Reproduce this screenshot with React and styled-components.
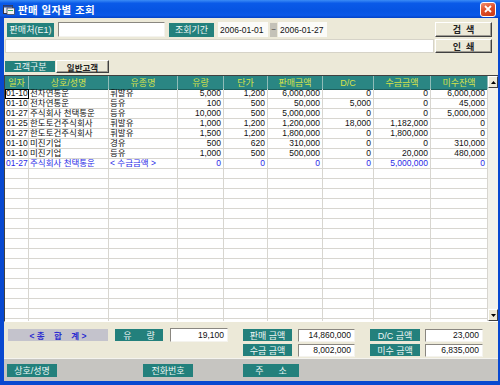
import React from "react";
import styled, { createGlobalStyle } from "styled-components";

const Global = createGlobalStyle`
  html, body { margin: 0; padding: 0; background: #fff; }
  body { font-family: "Liberation Sans", "Noto Sans CJK KR", sans-serif; }
  * { box-sizing: border-box; }
`;

const COLS = "24px 80px 69px 46px 44px 55px 51px 57px 57px";

const Window = styled.div`
  width: 500px;
  height: 385px;
  background: #0848d0;
  display: flex;
  flex-direction: column;
  overflow: hidden;
`;

const TitleBar = styled.div`
  height: 18px;
  display: flex;
  align-items: center;
  padding: 0 6px 0 3px;
  background: linear-gradient(180deg, #3b8cf6 0%, #0a5ae8 18%, #0654e2 60%, #0a58e8 85%, #0342c6 100%);
`;

const TitleText = styled.span`
  color: #fff;
  font-size: 10.5px;
  font-weight: bold;
  margin-left: 3px;
  letter-spacing: 0.4px;
  flex: 1;
`;

const CloseBtn = styled.div`
  width: 16px;
  height: 15px;
  border: 1px solid #fff;
  border-radius: 3px;
  background: linear-gradient(160deg, #f09070 0%, #e0502a 45%, #c83a16 100%);
  display: flex;
  align-items: center;
  justify-content: center;
  margin-right: -2px;
`;

const Body = styled.div`
  flex: 1;
  margin: 0 2px 4px 4px;
  background: #ece9d8;
  display: flex;
  flex-direction: column;
`;

const Top = styled.div`
  display: flex;
  padding: 4px 0 0 1px;
  gap: 1px;
`;

const TopLeft = styled.div`
  width: 429px;
  display: flex;
  flex-direction: column;
  gap: 2px;
`;

const TopRight = styled.div`
  width: 57px;
  display: flex;
  flex-direction: column;
  gap: 2px;
`;

const FieldRow = styled.div`
  height: 15px;
  display: flex;
  align-items: center;
  padding-left: 2px;
`;

const Label = styled.div`
  width: ${p => p.$w}px;
  height: ${p => p.$h || 13}px;
  margin-left: ${p => p.$ml || 0}px;
  background: #23807c;
  color: #eef6f4;
  font-size: 9px;
  display: flex;
  align-items: center;
  justify-content: center;
  white-space: pre;
  flex-shrink: 0;
`;

const Input = styled.div`
  width: ${p => p.$w}px;
  height: ${p => p.$h || 15}px;
  margin-left: ${p => p.$ml || 0}px;
  background: #fff;
  border-top: 1px solid #8a8780;
  border-left: 1px solid #8a8780;
  border-right: 1px solid #f4f3ee;
  border-bottom: 1px solid #f4f3ee;
  font-size: 8.5px;
  color: #111;
  display: flex;
  align-items: center;
  justify-content: ${p => (p.$right ? "flex-end" : "flex-start")};
  padding: 0 3px 0 2px;
  flex-shrink: 0;
`;

const DateInput = styled(Input)`
  border: none;
  background: #fbfbf8;
`;

const Tilde = styled.div`
  width: 7px;
  height: 14px;
  margin-left: 2px;
  background: #c4c2b8;
  font-size: 8px;
  display: flex;
  align-items: center;
  justify-content: center;
  color: #333;
`;

const Memo = styled.div`
  height: 14px;
  background: #fff;
  border: 1px solid #d6d3c8;
`;

const Button = styled.div`
  height: ${p => p.$h || 15}px;
  background: #ece9d8;
  border-top: 1px solid #fff;
  border-left: 1px solid #fff;
  border-right: 1px solid #404040;
  border-bottom: 1px solid #404040;
  box-shadow: inset -1px -1px 0 #a09d94;
  font-size: 9px;
  font-weight: bold;
  color: #222;
  display: flex;
  align-items: center;
  justify-content: center;
  white-space: pre;
`;

const CustRow = styled.div`
  display: flex;
  align-items: center;
  height: 13px;
  margin-top: 7px;
  padding-left: 1px;
  gap: 1px;
`;

const CustBtn = styled(Button)`
  width: 53px;
  height: 13px;
  font-size: 8.5px;
`;

const GridBox = styled.div`
  margin-top: 2px;
  height: 247px;
  display: flex;
  border-top: 1px solid #404040;
  border-left: 1px solid #404040;
  border-bottom: 1px solid #fff;
  background: #fff;
`;

const Table = styled.div`
  width: 483px;
  display: flex;
  flex-direction: column;
  overflow: hidden;
`;

const Row = styled.div`
  display: grid;
  grid-template-columns: ${COLS};
  height: ${p => (p.$head ? 13 : 10)}px;
  flex-shrink: 0;
  color: ${p => (p.$blue ? "#2a2ae6" : "#111")};
`;

const HeadCell = styled.div`
  background: #2a8683;
  color: #d6e24a;
  font-size: 9px;
  display: flex;
  align-items: center;
  justify-content: center;
  border-right: 1px solid #8fbcb8;
  border-bottom: 1px solid #1e5f5c;
`;

const Cell = styled.div`
  font-size: 8.5px;
  line-height: 9px;
  border-right: 1px solid #d8d6d0;
  border-bottom: 1px solid #d8d6d0;
  padding: 0 ${p => (p.$num ? 2 : 1)}px 0 1px;
  text-align: ${p => (p.$num ? "right" : "left")};
  white-space: nowrap;
  overflow: hidden;
  outline: ${p => (p.$focus ? "1px solid #000" : "none")};
  outline-offset: -1px;
`;

const Scroll = styled.div`
  width: 10px;
  display: flex;
  flex-direction: column;
  background: #f3f2ec;
`;

const ScrollBtn = styled.div`
  height: 12px;
  background: #ece9d8;
  border-top: 1px solid #fff;
  border-left: 1px solid #fff;
  border-right: 1px solid #404040;
  border-bottom: 1px solid #404040;
  display: flex;
  align-items: center;
  justify-content: center;
`;

const Track = styled.div`
  flex: 1;
`;

const Totals = styled.div`
  height: 36px;
  display: grid;
  grid-template-columns: 107px 55px 73px 55px 72px 55px 58px;
  grid-template-rows: 14px 14px;
  row-gap: 1px;
  align-items: center;
  padding: 6px 0 0 4px;
`;

const SumBox = styled.div`
  width: 100px;
  height: 12px;
  background: #c4c3cc;
  color: #2b2bd0;
  font-size: 8.5px;
  font-weight: bold;
  display: flex;
  align-items: center;
  justify-content: center;
  white-space: pre;
`;

const Spacer = styled.div``;

const BottomBar = styled.div`
  height: 23px;
  background: #c6c5c1;
  border-top: 1px solid #f4f3ee;
  display: grid;
  grid-template-columns: 136px 100px 1fr;
  align-items: center;
  padding-left: 3px;
`;

const Arrow = ({ up }) => (
  <svg width="5" height="3" viewBox="0 0 5 3">
    <path d={up ? "M2.5 0L5 3H0z" : "M0 0h5L2.5 3z"} fill="#000" />
  </svg>
);

const rows = [
  ["01-10", "전차연통운", "휘발유", "5,000", "1,200", "6,000,000", "0", "0", "6,000,000"],
  ["01-10", "전차연통운", "등유", "100", "500", "50,000", "5,000", "0", "45,000"],
  ["01-27", "주식회사 천택통운", "등유", "10,000", "500", "5,000,000", "0", "0", "5,000,000"],
  ["01-25", "한도토건주식회사", "휘발유", "1,000", "1,200", "1,200,000", "18,000", "1,182,000", "0"],
  ["01-27", "한도토건주식회사", "휘발유", "1,500", "1,200", "1,800,000", "0", "1,800,000", "0"],
  ["01-10", "미진기업", "경유", "500", "620", "310,000", "0", "0", "310,000"],
  ["01-10", "미진기업", "등유", "1,000", "500", "500,000", "0", "20,000", "480,000"],
  ["01-27", "주식회사 천택통운", "< 수금금액 >", "0", "0", "0", "0", "5,000,000", "0"],
];

const heads = ["일자", "상호/성명", "유종명", "유량", "단가", "판매금액", "D/C", "수금금액", "미수잔액"];

export default function App() {
  const empty = Array.from({ length: 17 });
  return (
    <>
      <Global />
      <Window>
        <TitleBar>
          <svg width="12" height="11" viewBox="0 0 12 11">
            <rect x="0.5" y="1.5" width="9" height="8" fill="#dfe8f4" stroke="#334" />
            <rect x="0.5" y="1.5" width="9" height="2" fill="#2a4a9a" />
            <rect x="4" y="4" width="7.5" height="6.5" fill="#f4f4f4" stroke="#445" strokeWidth="0.8" />
            <rect x="5" y="6" width="5" height="1" fill="#3a6" />
          </svg>
          <TitleText>판매 일자별 조회</TitleText>
          <CloseBtn>
            <svg width="8" height="8" viewBox="0 0 8 8">
              <path d="M1 1L7 7M7 1L1 7" stroke="#fff" strokeWidth="1.8" />
            </svg>
          </CloseBtn>
        </TitleBar>
        <Body>
          <Top>
            <TopLeft>
              <FieldRow>
                <Label $w={47} $h={14}>판매처(E1)</Label>
                <Input $w={107} $ml={4} />
                <Label $w={45} $h={14} $ml={4}>조회기간</Label>
                <DateInput $w={50} $ml={4}>2006-01-01</DateInput>
                <Tilde>~</Tilde>
                <DateInput $w={49} $ml={1}>2006-01-27</DateInput>
              </FieldRow>
              <Memo />
            </TopLeft>
            <TopRight>
              <Button>{"검  색"}</Button>
              <Button $h={14}>{"인  쇄"}</Button>
            </TopRight>
          </Top>
          <CustRow>
            <Label $w={50} $h={11}>고객구분</Label>
            <CustBtn>일반고객</CustBtn>
          </CustRow>
          <GridBox>
            <Table>
              <Row $head>
                {heads.map(h => (
                  <HeadCell key={h}>{h}</HeadCell>
                ))}
              </Row>
              {rows.map((r, i) => (
                <Row key={i} $blue={i === rows.length - 1}>
                  {r.map((c, j) => (
                    <Cell key={j} $num={j >= 3} $focus={i === 0 && j === 0}>
                      {c}
                    </Cell>
                  ))}
                </Row>
              ))}
              {empty.map((_, i) => (
                <Row key={"e" + i}>
                  {heads.map(h => (
                    <Cell key={h} />
                  ))}
                </Row>
              ))}
            </Table>
            <Scroll>
              <ScrollBtn>
                <Arrow up />
              </ScrollBtn>
              <Track />
              <ScrollBtn>
                <Arrow />
              </ScrollBtn>
            </Scroll>
          </GridBox>
          <Totals>
            <SumBox>{"< 총    합    계 >"}</SumBox>
            <Label $w={48} $h={12}>{"유      량"}</Label>
            <Input $w={58} $h={14} $right>19,100</Input>
            <Label $w={49} $h={12}>판매 금액</Label>
            <Input $w={57} $h={13} $right>14,860,000</Input>
            <Label $w={50} $h={12}>D/C 금액</Label>
            <Input $w={58} $h={13} $right>23,000</Input>
            <Spacer />
            <Spacer />
            <Spacer />
            <Label $w={49} $h={12}>수금 금액</Label>
            <Input $w={57} $h={13} $right>8,002,000</Input>
            <Label $w={50} $h={12}>미수 금액</Label>
            <Input $w={58} $h={13} $right>6,835,000</Input>
          </Totals>
          <BottomBar>
            <Label $w={50}>상호/성명</Label>
            <Label $w={50}>전화번호</Label>
            <Label $w={56}>{"주      소"}</Label>
          </BottomBar>
        </Body>
      </Window>
    </>
  );
}
